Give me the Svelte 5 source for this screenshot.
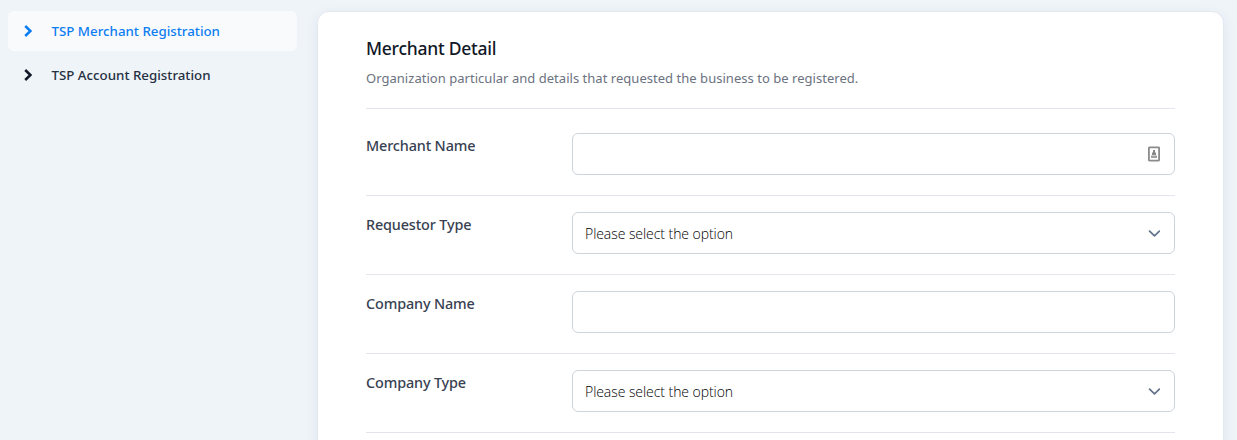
<script>
  const links = [
    { label: 'TSP Merchant Registration', active: true },
    { label: 'TSP Account Registration', active: false }
  ];
  const fields = [
    { id: 'merchant-name', label: 'Merchant Name', type: 'text', contact: true },
    { id: 'requestor-type', label: 'Requestor Type', type: 'select' },
    { id: 'company-name', label: 'Company Name', type: 'text' },
    { id: 'company-type', label: 'Company Type', type: 'select' }
  ];
</script>

<div class="page">
  <nav>
    {#each links as link}
      <a href="#top" class:active={link.active}>
        <svg width="8" height="12" viewBox="0 0 8 12"><path d="M1.2 1 6.4 6 1.2 11" fill="none" stroke="currentColor" stroke-width="2.5" /></svg>
        <span>{link.label}</span>
      </a>
    {/each}
  </nav>
  <main>
    <h1>Merchant Detail</h1>
    <p>Organization particular and details that requested the business to be registered.</p>
    <form>
      {#each fields as field}
        <div class="row">
          <label for={field.id}>{field.label}</label>
          <div class="control">
            {#if field.type === 'select'}
              <button type="button" id={field.id}>
                <span>Please select the option</span>
                <svg class="chevron" width="12" height="8" viewBox="0 0 12 8"><path d="M1.6 1.2 6.5 5.9l4.9-4.7" fill="none" stroke="#64748b" stroke-width="1.8" stroke-linecap="round" stroke-linejoin="round" /></svg>
              </button>
            {:else}
              <input id={field.id} type="text" />
              {#if field.contact}
                <svg class="contact" width="12" height="16" viewBox="0 0 12 16">
                  <rect x=".9" y="1.4" width="10.2" height="13.2" rx=".5" fill="#fff" stroke="#8b8b8b" stroke-width="1.8" />
                  <path d="M5 4h2v2l1 1v2H4V7l1-1z" fill="#888" />
                  <path d="M3 9h6v1H3z" fill="#d0d0d0" />
                  <path d="M3 10h6v2H3z" fill="#a0a0a0" />
                </svg>
              {/if}
            {/if}
          </div>
        </div>
      {/each}
    </form>
  </main>
</div>

<style>
  :global(body) { margin: 0; overflow: hidden; }
  * { box-sizing: border-box; }
  .page {
    height: 440px;
    padding: 11px 13px 0 8px;
    display: grid;
    grid-template-columns: 289px 907px;
    column-gap: 20px;
    overflow: hidden;
    background: #eff4f9;
    font-family: "Noto Sans", "Open Sans", sans-serif;
  }
  nav { display: flex; flex-direction: column; gap: 4px; }
  a {
    height: 40px;
    display: flex;
    align-items: center;
    gap: 19.5px;
    padding-left: 16px;
    border-radius: 6px;
    color: #111827;
    font-size: 13.3px;
    font-weight: 500;
    letter-spacing: 0;
    text-decoration: none;
  }
  a span { color: #253041; }
  a.active, a.active span { color: #0c7df2; }
  a.active { background: #f9fafc; }
  main {
    height: 600px;
    padding: 23px 48px;
    border: 1px solid #e2e8f0;
    border-radius: 12px;
    background: #fff;
    box-shadow: 0 4px 14px rgba(30, 60, 90, .08);
  }
  h1 { margin: 0; color: #111827; font-size: 17.5px; line-height: 26px; font-weight: 500; letter-spacing: -.25px; }
  p { margin: 6px 0 0; color: #6b7280; font-size: 13px; line-height: 22px; letter-spacing: .03px; }
  form { margin-top: 19px; border-top: 1px solid #e2e5eb; padding-top: 8px; }
  .row {
    height: 79px;
    display: grid;
    grid-template-columns: 206px 603px;
    padding-top: 16px;
    border-bottom: 1px solid #e2e5eb;
  }
  label { padding-top: 2px; color: #374151; font-size: 14.4px; line-height: 22px; font-weight: 500; letter-spacing: -.14px; }
  .control { position: relative; height: 42px; }
  input, button {
    width: 100%;
    height: 42px;
    padding: 0 14px 0 12px;
    border: 1px solid #ced4dc;
    border-radius: 6px;
    background: #fff;
    outline: none;
  }
  button {
    display: flex;
    align-items: center;
    justify-content: space-between;
    padding-top: 1px;
    color: #000;
    font: 300 14px/22px "Open Sans", "Noto Sans", sans-serif;
    letter-spacing: -.06px;
  }
  svg { display: block; flex: none; }
  .contact { position: absolute; right: 15px; top: 13px; }
</style>
